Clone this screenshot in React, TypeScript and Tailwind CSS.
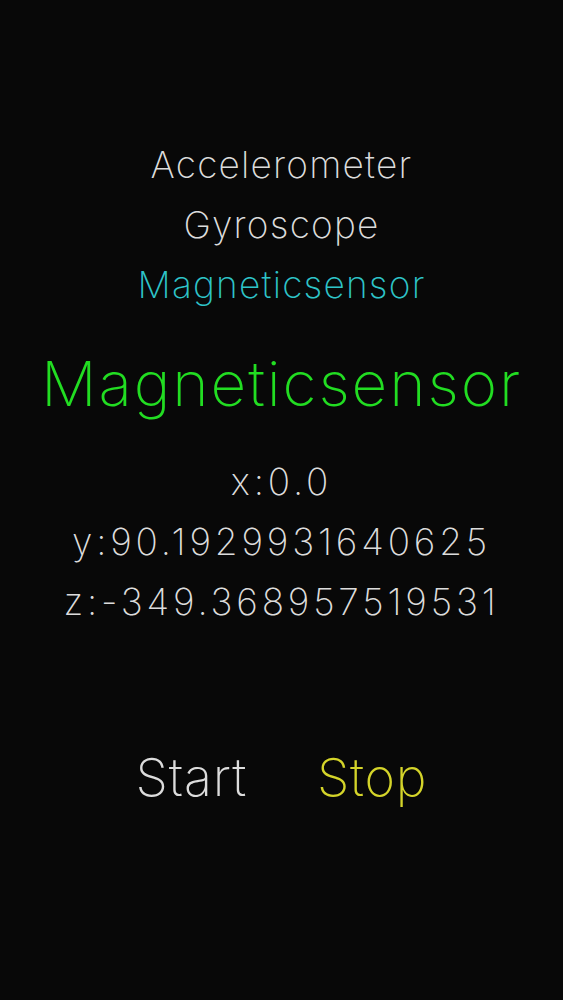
import { useState } from "react";

const SENSORS = ["Accelerometer", "Gyroscope", "Magneticsensor"];

export default function App() {
  const [active, setActive] = useState("Magneticsensor");
  const [running, setRunning] = useState(false);

  return (
    <div
      className="w-[563px] h-[1000px] bg-[#080808] flex flex-col items-center text-[#dcdcdc] font-extralight"
      style={{ fontFamily: '"Inter", "Liberation Sans", sans-serif' }}
    >
      <div className="mt-[135px] flex flex-col items-center">
        {SENSORS.map((s) => (
          <button
            key={s}
            onClick={() => setActive(s)}
            className={`h-[60px] leading-[60px] text-[37px] tracking-[1.2px] ${
              active === s ? "text-[#2ec4c8]" : "text-[#dcdcdc]"
            }`}
          >
            {s}
          </button>
        ))}
      </div>

      <div className="mt-[24px] h-[90px] leading-[90px] text-[62px] tracking-[1.9px] text-[#22dd22]">
        {active}
      </div>

      <div className="mt-[23px] flex flex-col items-center text-[37px] tracking-[3.8px]">
        <div className="h-[60px] leading-[60px]">x:0.0</div>
        <div className="h-[60px] leading-[60px]">y:90.1929931640625</div>
        <div className="h-[60px] leading-[60px]">z:-349.368957519531</div>
      </div>

      <div className="mt-[111px] flex items-center gap-[70px] text-[52px] tracking-[0.8px] h-[70px] leading-[70px]">
        <button onClick={() => setRunning(true)} className={running ? "text-[#d4d42a]" : "text-[#dcdcdc]"}>
          Start
        </button>
        <button onClick={() => setRunning(false)} className={running ? "text-[#dcdcdc]" : "text-[#d4d42a]"}>
          Stop
        </button>
      </div>
    </div>
  );
}
